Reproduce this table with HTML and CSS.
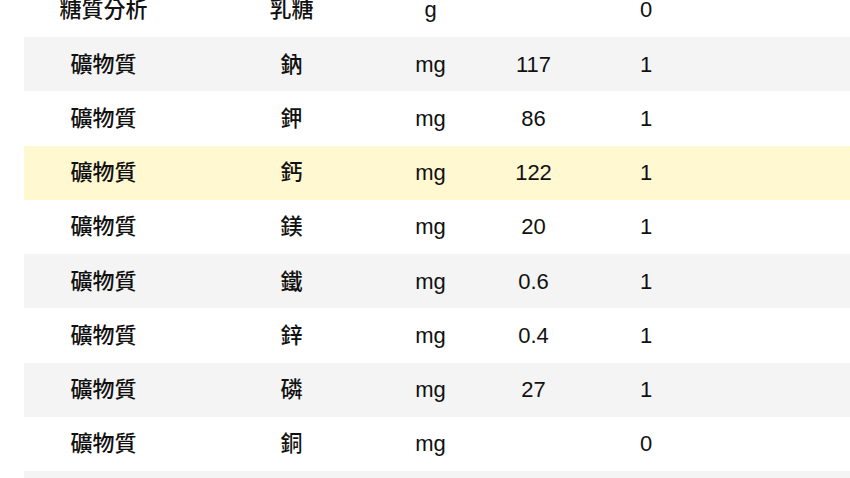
FILE: index.html
```html
<!DOCTYPE html>
<html lang="zh-Hant">
<head>
<meta charset="utf-8">
<link rel="stylesheet" href="styles.css">
</head>
<body>
<div class="table">
  <div class="row"><div class="c c1">糖質分析</div><div class="c c2">乳糖</div><div class="c c3">g</div><div class="c c4"></div><div class="c c5">0</div><div class="c c6"></div></div>
  <div class="row alt"><div class="c c1">礦物質</div><div class="c c2">鈉</div><div class="c c3">mg</div><div class="c c4">117</div><div class="c c5">1</div><div class="c c6"></div></div>
  <div class="row"><div class="c c1">礦物質</div><div class="c c2">鉀</div><div class="c c3">mg</div><div class="c c4">86</div><div class="c c5">1</div><div class="c c6"></div></div>
  <div class="row hl"><div class="c c1">礦物質</div><div class="c c2">鈣</div><div class="c c3">mg</div><div class="c c4">122</div><div class="c c5">1</div><div class="c c6"></div></div>
  <div class="row"><div class="c c1">礦物質</div><div class="c c2">鎂</div><div class="c c3">mg</div><div class="c c4">20</div><div class="c c5">1</div><div class="c c6"></div></div>
  <div class="row alt"><div class="c c1">礦物質</div><div class="c c2">鐵</div><div class="c c3">mg</div><div class="c c4">0.6</div><div class="c c5">1</div><div class="c c6"></div></div>
  <div class="row"><div class="c c1">礦物質</div><div class="c c2">鋅</div><div class="c c3">mg</div><div class="c c4">0.4</div><div class="c c5">1</div><div class="c c6"></div></div>
  <div class="row alt"><div class="c c1">礦物質</div><div class="c c2">磷</div><div class="c c3">mg</div><div class="c c4">27</div><div class="c c5">1</div><div class="c c6"></div></div>
  <div class="row"><div class="c c1">礦物質</div><div class="c c2">銅</div><div class="c c3">mg</div><div class="c c4"></div><div class="c c5">0</div><div class="c c6"></div></div>
  <div class="row alt"><div class="c c1">礦物質</div><div class="c c2">錳</div><div class="c c3">mg</div><div class="c c4"></div><div class="c c5">0</div><div class="c c6"></div></div>
</div>
</body>
</html>
```
FILE: styles.css
```css
html, body {
  margin: 0;
  padding: 0;
  background: #ffffff;
  overflow: hidden;
}
body {
  font-family: "Liberation Sans", Arial, "Noto Sans CJK TC", sans-serif;
  font-size: 22px;
  font-weight: 500;
  color: #111111;
}
.table {
  margin-top: -17.25px;
  margin-left: 24px;
  width: 840px;
}
.row {
  display: grid;
  grid-template-columns: 159px 217px 61px 145px 80px 1fr;
  height: 54.25px;
  align-items: center;
  background: #ffffff;
}
.row.alt {
  background: #f4f4f4;
}
.row.hl {
  background: #fff8d1;
}
.c {
  line-height: 24px;
  padding-top: 1px;
  text-align: center;
  white-space: nowrap;
}
```
